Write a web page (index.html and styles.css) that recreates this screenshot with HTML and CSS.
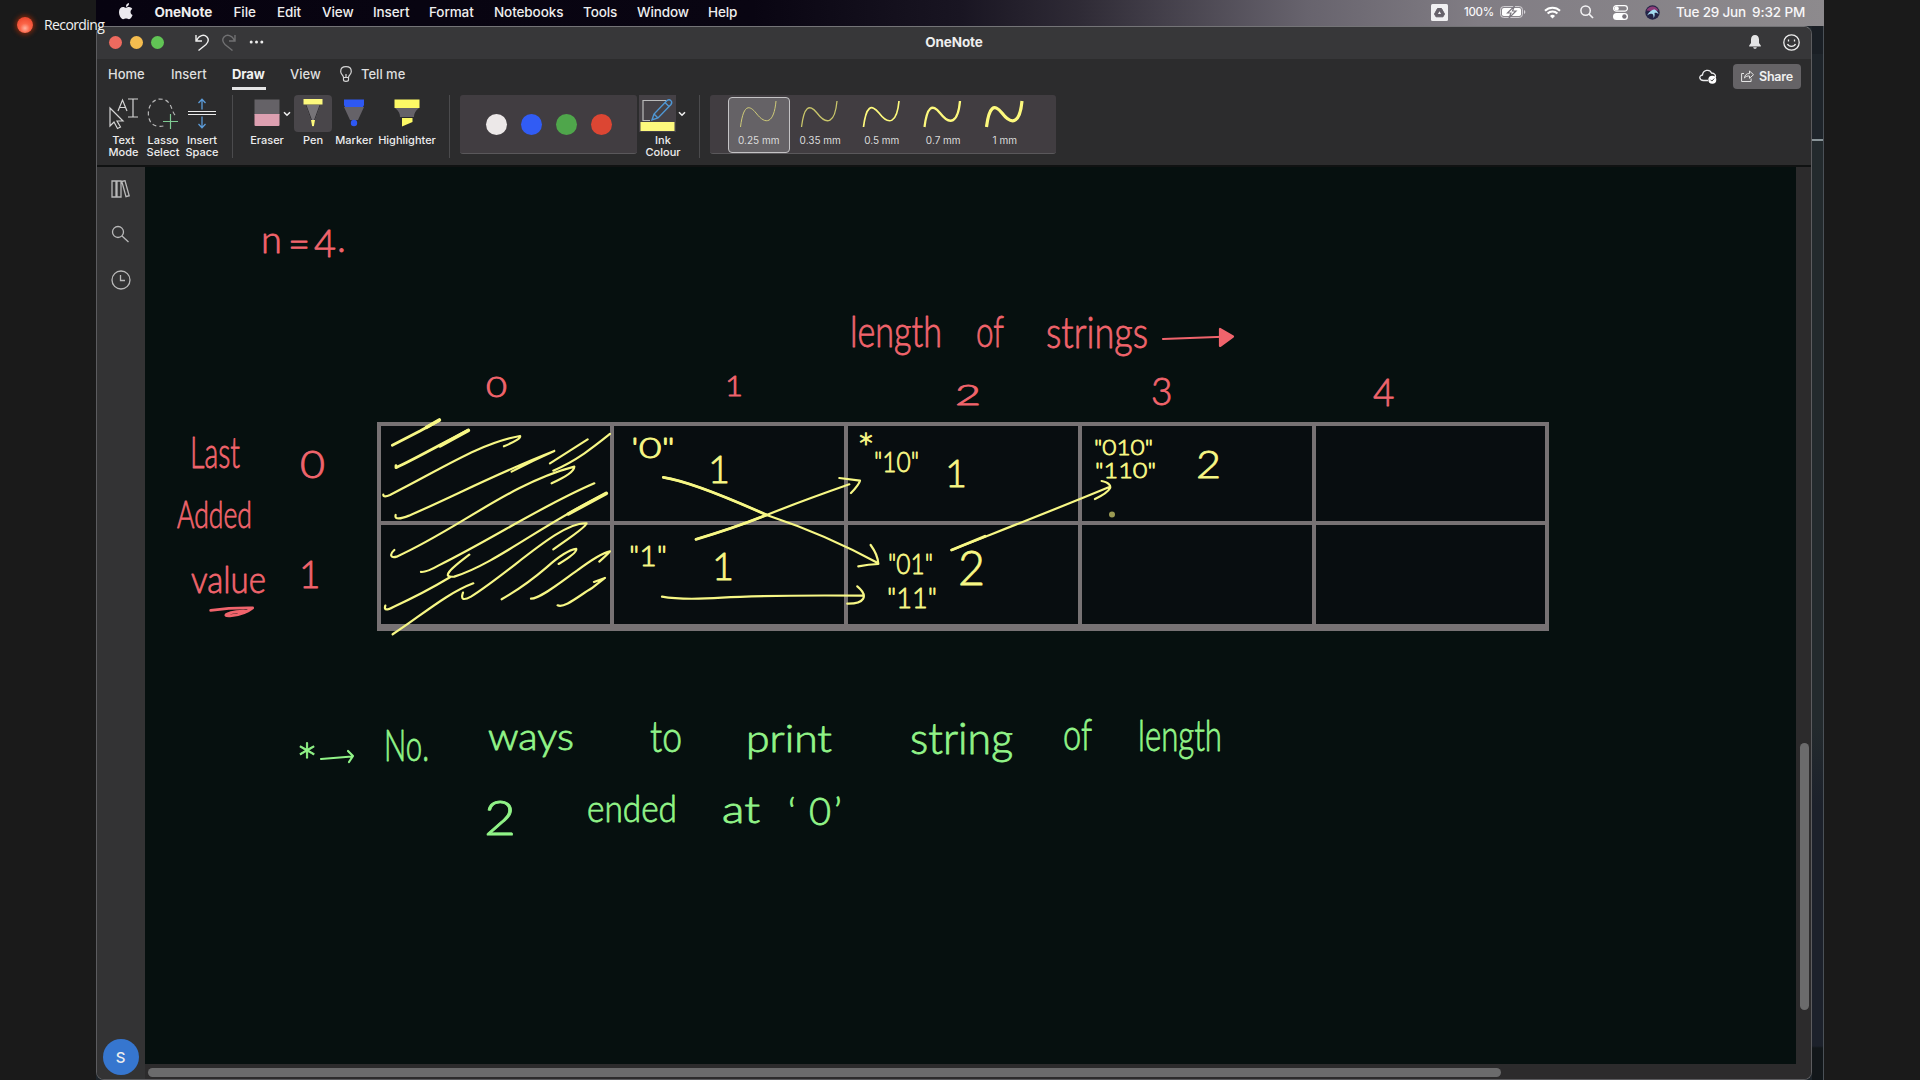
FILE: index.html
```
<!DOCTYPE html>
<html lang="en">
<head>
<meta charset="utf-8">
<title>OneNote</title>
<link rel="stylesheet" href="styles.css">
</head>
<body>
<div class="recording">
  <span class="rec-dot"></span><span>Recording</span>
</div>
<div class="desktop">
  <header class="menubar">
    <nav class="menus">
      <svg class="apple" viewBox="0 0 14 17"><path d="M10 0C8 .2 6.800 1.800 7 3.900 9 3.700 10.200 2 10 0ZM7.100 4.800C6.300 4.800 5.200 4 4 4 2 4 0 5.600 0 9c0 3.600 2.200 7.200 4.100 7.200 1.100 0 1.700-.7 3-.7s1.800.7 2.900.7c1.700 0 3-2.500 3.600-4.200-2.700-1.200-2.600-4.800-.3-6-.8-1.200-2-1.900-3.200-1.900-1.200 0-2.200.7-3 .7Z"/></svg>
      <b>OneNote</b><span>File</span><span>Edit</span><span>View</span><span>Insert</span><span>Format</span><span>Notebooks</span><span>Tools</span><span>Window</span><span>Help</span>
    </nav>
    <div class="status">
      <svg class="s-drive" viewBox="0 0 17 17"><rect width="17" height="17" rx="1.500" fill="#f1f0f2"/><path d="M6.500 4.500h4l3 5.500-1.500 2.800H5L3.500 10Z" fill="#66616a" stroke="#66616a" stroke-linejoin="round"/><path d="M8.500 7.200l1.600 2.900H6.900Z" fill="#f1f0f2"/></svg>
      <span class="pct">100%</span>
      <svg class="s-batt" viewBox="0 0 26 12"><rect x=".6" y=".6" width="21.800" height="10.800" rx="3" fill="none" stroke="#d7d4d9"/><rect x="2" y="2" width="19" height="8" rx="1.800" fill="#fff"/><path d="M24 4c1.800.6 1.800 3.400 0 4Z" fill="#d7d4d9"/><path d="M14.500 0 7.500 7h3.500L9 12l7-7h-3.500Z" fill="#fff" stroke="#7c7880" stroke-width="1.200"/></svg>
      <svg class="s-wifi" viewBox="0 0 17 13"><path d="M1 4.700C5 .6 12 .6 16 4.700M3.600 7.500c2.700-2.800 7.100-2.800 9.800 0" fill="none" stroke="#fff" stroke-width="2"/><path d="M8.500 12.500 6 9.900c1.400-1.400 3.600-1.400 5 0Z" fill="#fff"/></svg>
      <svg class="s-find" viewBox="0 0 14 14"><circle cx="5.600" cy="5.600" r="4.700" fill="none" stroke="#f3f2f4" stroke-width="1.500"/><path d="m9 9 4 4" stroke="#f3f2f4" stroke-width="1.700"/></svg>
      <svg class="s-cc" viewBox="0 0 15 15"><rect x=".6" y=".6" width="13.800" height="5.600" rx="2.800" fill="none" stroke="#fff" stroke-width="1.200"/><circle cx="3.600" cy="3.400" r="2.200" fill="#fff"/><rect y="8" width="15" height="7" rx="3.500" fill="#fff"/><circle cx="11.400" cy="11.500" r="2.200" fill="#77737b"/></svg>
      <svg class="s-siri" viewBox="0 0 15 15"><circle cx="7.500" cy="7.500" r="7.200" fill="#252447"/><path d="M1.500 5.500C4 0 11 0 13.500 5.500L7 6Z" fill="#8d3b78"/><path d="M2 10.500C4 7 7 4.500 9 4.500c2 0 4 2.500 4.500 4.500-2-1.500-3-1.500-4-1 .5 2 0 4-1 5 0-2 0-3-1-4-2-.5-3.500 0-5.500 1.500Z" fill="#a5dcf2"/></svg>
      <span class="date">Tue 29 Jun</span><span class="time">9:32 PM</span>
    </div>
  </header>
  <div class="stage">
    <main class="window">
      <div class="titlebar">
        <div class="lights"><i class="red"></i><i class="amber"></i><i class="green"></i></div>
        <svg class="undo" viewBox="0 0 14 17"><path d="M1 1v6h6M1.500 6.500C4 1 9 0 12 3c2.500 3 1 5.500-1 7.500L3.500 16.500" /></svg>
        <svg class="undo redo" viewBox="0 0 14 17"><path d="M13 1v6H7M12.500 6.500C10 1 5 0 2 3-.5 6 1 8.500 3 10.500l7.500 6" /></svg>
        <svg class="dots" viewBox="0 0 14 4"><circle cx="1.700" cy="2" r="1.500"/><circle cx="7" cy="2" r="1.500"/><circle cx="12.300" cy="2" r="1.500"/></svg>
        <b class="title">OneNote</b>
        <svg class="bell" viewBox="0 0 12 14"><path d="M6 0C3.500 0 2 2 2 4.500V8L.2 10.500V11.500h11.600v-1L10 8V4.500C10 2 8.500 0 6 0ZM4.200 12.200h3.600C7.500 14.200 4.500 14.200 4.200 12.200Z" fill="#e4e4e5"/></svg>
        <svg class="smile" viewBox="0 0 17 17"><circle cx="8.500" cy="8.500" r="7.700"/><path d="M4.500 10c1.500 3.200 6.500 3.200 8 0M5.500 5.500v2M11.500 5.500v2"/></svg>
      </div>
      <div class="tabs">
        <span>Home</span><span>Insert</span><span class="active">Draw</span><span>View</span>
        <svg class="bulb" viewBox="0 0 12 16"><path d="M3.500 11.500C3.500 9 .7 8.500.7 5.500.7 2.500 3 .7 6 .7s5.300 1.800 5.300 4.800c0 3-2.800 3.500-2.800 6ZM3.500 11.500v2.500c0 1.700 5 1.700 5 0v-2.500M6 8v3"/></svg>
        <span>Tell me</span>
        <svg class="cloud" viewBox="0 0 18 15"><path d="M4.500 11.500C0 11.500-.5 6.500 3.500 6 4 1 10.500-.5 12.500 4c3 0 4.500 2 3.800 4.500M4.500 11.500H9" fill="none" stroke="#ededee" stroke-width="1.300"/><circle cx="13.300" cy="10.700" r="4" fill="#fff"/><path d="m11.500 10.700 1.400 1.400 2.300-2.600" fill="none" stroke="#444"/></svg>
        <div class="share"><svg viewBox="0 0 13 12"><path d="M3 3.500H.6v8h9.500V8.500M3.500 8c.3-3 2-4.500 5-4.500V1l4 3.700-4 3.600V6C6.500 5.800 5 6.200 3.500 8Z"/></svg>Share</div>
      </div>
      <div class="ribbon">
        <div class="tool w-text"><svg viewBox="0 0 30 32"><path d="M1 10v18l4-4 3.500 6.500 3-1.500-3.500-6H14ZM9 13l4.500-11L18 13M10.500 9.500h6M19 1h10M19 19h10M24 1v18" fill="none" stroke="#d4d4d4" stroke-width="1.200"/></svg><p>Text<br>Mode</p></div>
        <div class="tool w-lasso"><svg viewBox="0 0 32 32"><path d="M28 17C24 13 25 1 13 1-2 2-2 27 10 28c4 1 7 0 9-1" fill="none" stroke="#b6b6b6" stroke-width="1.200" stroke-dasharray="4 3"/><path d="M23.500 16v15M16 23.500h15" stroke="#7fcb93" stroke-width="1.200"/></svg><p>Lasso<br>Select</p></div>
        <div class="tool w-space"><svg viewBox="0 0 30 32"><path d="M1 13.500h28M1 16.500h28" stroke="#ececec" stroke-width="1.100"/><path d="M15 11.500V1.500M11.500 5 15 1.300 18.500 5M15 18.500v11M11.500 26l3.500 3.700L18.500 26" fill="none" stroke="#5b9bd8" stroke-width="1.300"/></svg><p>Insert<br>Space</p></div>
        <div class="divider"></div>
        <div class="tool w-eraser"><svg viewBox="0 0 26 32"><path d="M.5 1.500h25V17H.5Z" fill="#656267"/><path d="M.5 16h25v11a1 1 0 0 1-1 1h-23a1 1 0 0 1-1-1Z" fill="#dda0b1"/></svg><p>Eraser</p></div>
        <svg class="chev" viewBox="0 0 8 6"><path d="m1 1.200 3 3 3-3"/></svg>
        <div class="tool w-pen"><svg class="picked" viewBox="0 0 38 37"><path d="M9.500 4h19v5.500h-19Z" fill="#fdf97d"/><path d="M11.500 10h15L21 25h-4Z" fill="#777478"/><path d="m12 10 5.500 15M26 10l-5.500 15" stroke="#343236" stroke-width="1"/><path d="M17 25h4l-1 5.500-1 1-1-1Z" fill="#fdf97d"/></svg><p>Pen</p></div>
        <div class="tool w-marker"><svg viewBox="0 0 22 32"><path d="M1 9h20L15 22H7Z" fill="#656268"/><path d="M1 1.500h20V7L20 9H2L1 7Z" fill="#2e58f2"/><circle cx="11" cy="25" r="3.200" fill="#2e58f2"/></svg><p>Marker</p></div>
        <div class="tool w-high"><svg viewBox="0 0 26 32"><path d="M1 10h24c-4 3-5 6-5 9H6c0-3-1-6-5-9Z" fill="#656268"/><path d="M.5 1.500h25V10H.5ZM8 20h10.500v4L8 28.500Z" fill="#fdf965"/></svg><p>Highlighter</p></div>
        <div class="divider"></div>
        <div class="colours"><i class="c-white"></i><i class="c-blue"></i><i class="c-green"></i><i class="c-red"></i></div>
        <div class="tool w-ink"><svg class="inkicon" viewBox="0 0 37 37"><path d="M27 5.500H4v20h7" fill="none" stroke="#bbb" stroke-width="1.200"/><path d="m13 25 2-6L28 5.500c3-2 6 1 4 4L19 23Zm2-6 4 4M26 7.500l4.500 4.500" fill="none" stroke="#4f97d4" stroke-width="1.400"/><path d="M1.500 27h34v9h-34Z" fill="#fdf97d"/></svg><p>Ink<br>Colour</p></div>
        <svg class="chev" viewBox="0 0 8 6"><path d="m1 1.200 3 3 3-3"/></svg>
        <div class="divider"></div>
        <div class="widths">
          <div class="sel"><svg viewBox="0 0 40 28"><path class="w1" d="M1.500 27C4 7 9 3 17 13c10 13 18 10 20-12"/></svg>0.25 mm</div>
          <div><svg viewBox="0 0 40 28"><path class="w2" d="M1.500 27C4 7 9 3 17 13c10 13 18 10 20-12"/></svg>0.35 mm</div>
          <div><svg viewBox="0 0 40 28"><path class="w3" d="M1.500 27C4 7 9 3 17 13c10 13 18 10 20-12"/></svg>0.5 mm</div>
          <div><svg viewBox="0 0 40 28"><path class="w4" d="M1.500 27C4 7 9 3 17 13c10 13 18 10 20-12"/></svg>0.7 mm</div>
          <div><svg viewBox="0 0 40 28"><path class="w5" d="M1.500 27C4 7 9 3 17 13c10 13 18 10 20-12"/></svg>1 mm</div>
        </div>
      </div>
      <div class="body">
        <aside class="rail">
          <svg class="lib" viewBox="0 0 19 18"><path d="M1 1h4v16H1ZM6 1h4v16H6ZM10.800 1.500l3.200-.8 4.200 15-3.200 1Z"/></svg>
          <svg class="lib" viewBox="0 0 19 18"><circle cx="7" cy="7" r="5.500"/><path d="m11 11 6.500 6"/></svg>
          <svg class="lib clock" viewBox="0 0 20 20"><circle cx="10" cy="10" r="9"/><path d="M9.500 5v5.500H14"/></svg>
          <span class="avatar">S</span>
        </aside>
        <section class="page">
          <div class="grid"><i></i><i></i><i></i><i></i><i></i><i></i><i></i><i></i><i></i><i></i></div>
          <svg class="ink" viewBox="145 167 1651 897">
            <g class="pink">
              <text class="m" x="261 288 314 337" y="253 257 257 252">n=4.</text>
              <text class="l" x="850" y="347" textLength="92" lengthAdjust="spacingAndGlyphs">length</text>
              <text class="l" x="976" y="347" textLength="28" lengthAdjust="spacingAndGlyphs">of</text>
              <text class="l" x="1046" y="348" textLength="102" lengthAdjust="spacingAndGlyphs">strings</text>
              <text class="s" x="486" y="397" textLength="21" lengthAdjust="spacingAndGlyphs">0</text>
              <text class="s" x="725" y="396" textLength="18" lengthAdjust="spacingAndGlyphs">1</text>
              <text class="s" x="955" y="405" textLength="26" lengthAdjust="spacingAndGlyphs">2</text>
              <text class="n" x="1151" y="405">3</text>
              <text class="n" x="1373" y="406">4</text>
              <text class="l" x="190" y="468" textLength="50" lengthAdjust="spacingAndGlyphs">Last</text>
              <text class="n" x="300" y="478" textLength="25" lengthAdjust="spacingAndGlyphs">0</text>
              <text class="m" x="177" y="528" textLength="75" lengthAdjust="spacingAndGlyphs">Added</text>
              <text class="m" x="191" y="593" textLength="75" lengthAdjust="spacingAndGlyphs">value</text>
              <text class="n" x="299" y="588">1</text>
              <g transform="translate(160 210) scale(.3333)"><path class="t3" d="M152 1201q60-8 126-7c-35 28-110 29-68 15q24-7 52-5"/></g>
              <path class="t2" d="m1163 339 67-2.500"/>
              <path class="t2" fill="#f0646c" d="M1220 329v17l13-9.500Z"/>
            </g>
            <g class="yellow">
              <g transform="translate(160 210) scale(.3333)">
                <path class="t3" d="M697 706 780 663 838 631M708 767v6Q745 756 840 705L925 661"/>
                <path class="t4" d="M800 652l38-22M840 708l85-47M1225 912l114-62"/>
                <path class="t2" d="M670 854c0 7 9 6 20 1C850 774 960 700 1080 678q6 8-48 31M707 915c-4 15 15 12 40 2C880 860 1010 790 1183 723M1055 785q65-34 128-62M703 1020c-14 12-13 26 7 20C890 960 1050 820 1243 770q1 19-68 50M1170 760l113-72M1180 782c70-30 120-70 170-110M783 1086q15 2 52-19C1010 980 1140 890 1303 820M928 1034c-60 45-85 70-45 66C1010 1060 1150 940 1339 850M676 1187c-5 16 7 13 24 4Q790 1150 870 1102M909 1148c-7 20 0 25 24 12C1060 1080 1200 935 1280 940q0 10-100 78M698 1273C780 1220 860 1150 940 1120M1025 1168q70-40 134-95 60-53 90-56 3 12-53 45M1113 1166c30 0 100-58 138-84Q1320 1030 1350 1024q-8 10-32 31M1193 1186c20 10 66-30 102-51l40-31-33 12"/>
              </g>
              <g transform="translate(600 400) scale(.3333)">
                <path class="t2" d="M190 232Q280 246 500 345 680 405 835 490M812 435q22 30 23 57-29 1-60 7M288 418Q400 385 500 345T748 253M718 234q31 4 62 8-3 12-27 37M186 590q60 11 180 3t422-6M772 559c36 30 20 53-30 52M1055 450C1180 400 1300 355 1528 261M1505 243c24 5 28 15 25 22q-8 15-45 32"/>
                <path class="t3" d="M288 418Q400 385 500 345M190 232Q280 246 500 345M1055 450l100-41"/>
              </g>
              <circle cx="1112" cy="514.500" r="3" fill="#9b9a53" stroke="none"/>
              <text class="s" x="631" y="458" textLength="44" lengthAdjust="spacingAndGlyphs">'0"</text>
              <text class="n" x="708" y="483" textLength="22" lengthAdjust="spacingAndGlyphs">1</text>
              <text class="s" x="629" y="566" textLength="38" lengthAdjust="spacingAndGlyphs">"1"</text>
              <text class="n" x="712" y="580" textLength="22" lengthAdjust="spacingAndGlyphs">1</text>
              <text class="star" x="857" y="464">*</text>
              <text class="s" x="874" y="472" textLength="45" lengthAdjust="spacingAndGlyphs">"10"</text>
              <text class="n" x="945" y="487" textLength="22" lengthAdjust="spacingAndGlyphs">1</text>
              <text class="s" x="888" y="574" textLength="45" lengthAdjust="spacingAndGlyphs">"01"</text>
              <text class="s" x="887" y="608" textLength="50" lengthAdjust="spacingAndGlyphs">"11"</text>
              <text class="xl" x="958" y="585" textLength="27" lengthAdjust="spacingAndGlyphs">2</text>
              <text class="xs" x="1094" y="455" textLength="59" lengthAdjust="spacingAndGlyphs">"010"</text>
              <text class="xs" x="1095" y="478" textLength="61" lengthAdjust="spacingAndGlyphs">"110"</text>
              <text class="n" x="1196" y="478" textLength="25" lengthAdjust="spacingAndGlyphs">2</text>
            </g>
            <g class="lime">
              <text class="star big" x="296" y="781">*</text>
              <path class="t2" d="m321 759 31-2.500M348 751l5 5-4 6"/>
              <text class="l" x="384" y="761" textLength="45" lengthAdjust="spacingAndGlyphs">No.</text>
              <text class="m" x="488" y="750" textLength="86" lengthAdjust="spacingAndGlyphs">ways</text>
              <text class="l" x="650" y="752" textLength="32" lengthAdjust="spacingAndGlyphs">to</text>
              <text class="m" x="746" y="752" textLength="86" lengthAdjust="spacingAndGlyphs">print</text>
              <text class="l" x="910" y="754" textLength="103" lengthAdjust="spacingAndGlyphs">string</text>
              <text class="l" x="1063" y="750" textLength="29" lengthAdjust="spacingAndGlyphs">of</text>
              <text class="l" x="1138" y="751" textLength="84" lengthAdjust="spacingAndGlyphs">length</text>
              <text class="xl" x="484" y="835" textLength="32" lengthAdjust="spacingAndGlyphs">2</text>
              <text class="m" x="587" y="822" textLength="90" lengthAdjust="spacingAndGlyphs">ended</text>
              <text class="m" x="722" y="823" textLength="38" lengthAdjust="spacingAndGlyphs">at</text>
              <text class="m" x="788 809 834" y="825">‘0’</text>
            </g>
          </svg>
        </section>
        <div class="vtrack"><i></i></div>
        <div class="htrack"><i></i></div>
      </div>
    </main>
    <div class="behind"></div>
  </div>
</div>
</body>
</html>
```
FILE: styles.css
```
* { box-sizing: border-box; }
body { margin: 0; width: 1920px; height: 1080px; overflow: hidden; background: #1a1a1a; color: #eee; font-family: Inter, "Liberation Sans", sans-serif; position: relative; }
svg { display: block; flex: none; }
p { margin: 0; }
.recording { position: absolute; z-index: 5; left: 17px; top: 15px; display: flex; align-items: center; gap: 11px; font: 14px/20px "Open Sans", sans-serif; color: #f2f2f2; letter-spacing: -.6px; }
.rec-dot { width: 16px; height: 16px; border-radius: 50%; background: radial-gradient(circle at 50% 70%, #ffb3a0 0, #fb6548 35%, #ee4a30 75%); box-shadow: 0 0 4px 2px #74260e; }
.desktop { width: 1728px; height: 1080px; margin-left: 96px; display: flex; flex-direction: column; background: #1d242a; }
.menubar { height: 26px; padding-bottom: 2px; flex: none; display: flex; justify-content: space-between; align-items: center; background: linear-gradient(90deg, #070310 0, #090512 38%, #191522 50%, #2f2b36 57%, #67636d 70%, #817d84 80%, #8d8a8d 100%); font-size: 13.5px; font-weight: 500; letter-spacing: -.1px; }
.menus { display: grid; grid-template-columns: 36px 79px 43.5px 45px 51px 56px 65px 89px 54px 71px 60px; padding-left: 22.500px; align-items: center; }
.menus b { font-weight: 700; }
.apple { width: 14px; height: 17px; fill: #ebe9ee; margin-top: -2px; }
.status { display: flex; align-items: center; padding-right: 18px; color: #f8f7f9; }
.s-drive { width: 17px; height: 17px; margin-right: 16px; }
.pct { width: 31px; font-size: 11.500px; letter-spacing: -.3px; margin-right: 5px; }
.s-batt { width: 26px; height: 12px; margin-right: 18px; }
.s-wifi { width: 17px; height: 13px; margin-right: 19px; }
.s-find { width: 14px; height: 14px; margin-right: 19px; }
.s-cc { width: 15px; height: 15px; margin-right: 17px; }
.s-siri { width: 15px; height: 15px; margin-right: 16px; }
.date { width: 76px; white-space: nowrap; letter-spacing: -.2px; }
.time { width: 54px; white-space: nowrap; }
.stage { flex: 1; display: flex; }
.window { width: 1716px; height: 1054px; border: 1px solid #5c5c5f; border-top-color: #747477; border-radius: 8px; overflow: hidden; display: flex; flex-direction: column; background: #2c2c2d; }
.behind { flex: 1; border-right: 1px solid #4b5157; background: linear-gradient(#1a1f25 0 28px, #1e242a 28px 113px, #899498 113px 115px, #232a2d 115px 700px, #1c212b 780px 1020px, #12171a 1022px); }
.titlebar { height: 32px; flex: none; display: flex; align-items: center; background: #373739; padding: 0 11px 2px 12px; }
.lights { display: flex; gap: 8px; width: 86px; }
.lights i { width: 13px; height: 13px; border-radius: 50%; }
.red { background: #ee6a5f; } .amber { background: #f5bd4f; } .green { background: #61c455; }
.undo { width: 14px; height: 17px; fill: none; stroke: #eee; stroke-width: 1.400; margin-right: 13px; }
.redo { stroke: #707072; }
.dots { width: 15px; height: 4px; fill: #eee; }
.title { margin-left: 658px; font-size: 13.500px; letter-spacing: -.1px; width: 64px; text-align: center; }
.bell { width: 12px; height: 14px; margin-left: auto; margin-right: 22px; }
.smile { width: 17px; height: 17px; fill: none; stroke: #eee; stroke-width: 1.300; }
.tabs { height: 34px; flex: none; display: flex; align-items: center; padding: 0 10px 0 11px; font-size: 13px; font-weight: 500; color: #dfdfdf; padding-bottom: 5px; }
.tabs span { white-space: nowrap; width: 58px; }
.tabs span:nth-child(1) { width: 63px; } .tabs span:nth-child(2) { width: 61px; }
.tabs .active { width: 34px; margin-right: 24px; font-weight: 700; color: #f2f2f2; height: 28px; line-height: 25px; margin-top: 4px; border-bottom: 3px solid #e5e5e5; letter-spacing: -.1px; }
.tabs span:nth-child(4) { width: 50px; }
.bulb { width: 12px; height: 16px; fill: none; stroke: #d6d6d6; stroke-width: 1.200; margin-right: 9px; }
.cloud { width: 18px; height: 15px; margin-left: auto; margin-right: 16px; margin-top: 5px; }
.share { width: 68px; height: 25px; margin-top: 5px; border-radius: 4px; background: #656366; display: flex; align-items: center; justify-content: center; gap: 5px; font-size: 12.500px; font-weight: 600; color: #f0f0f0; letter-spacing: -.2px; }
.share svg { width: 13px; height: 12px; fill: none; stroke: #e4e4e4; }
.ribbon { height: 74px; flex: none; display: flex; align-items: flex-start; padding: 2px 0 0 5px; border-bottom: 2px solid #101212; }
.tool { display: flex; flex-direction: column; align-items: center; font-size: 11px; font-weight: 500; line-height: 12.200px; text-align: center; color: #ededed; padding-top: 3px; flex: none; }
.tool svg { height: 32px; margin-bottom: 4px; }
.w-text { width: 43px; } .w-text svg, .w-space svg { width: 30px; }
.w-lasso { width: 36px; } .w-lasso svg { width: 32px; }
.w-space { width: 42px; margin-right: 9px; }
.divider { width: 1px; height: 63px; background: #4b4b4d; }
.w-eraser { width: 42px; margin-left: 13px; } .w-eraser svg { width: 26px; }
.chev { width: 8px; height: 6px; fill: none; stroke: #eee; stroke-width: 1.600; margin: 16px 4px 0 -5px; }
.tool.w-pen { width: 38px; padding-top: 0; }
.tool .picked { width: 38px; height: 37px; border-radius: 4px; background: #49464a; margin-bottom: 2px; }
.w-pen { margin-left: -1px; margin-right: 2px; }
.w-marker { width: 40px; } .w-marker svg { width: 22px; }
.w-high { width: 62px; margin-left: 2px; margin-right: 11px; } .w-high svg { width: 26px; }
.colours { margin: 0 2px 0 10px; width: 177px; height: 59px; border-radius: 3px; background: #413d41; border-bottom: 1px solid #5a585b; display: flex; align-items: center; justify-content: center; gap: 14px; flex: none; }
.colours i { width: 21px; height: 21px; border-radius: 50%; }
.c-white { background: #ece8e8; } .c-blue { background: #315cf4; } .c-green { background: #4fa64b; } .c-red { background: #dc4633; }
.tool.w-ink { width: 48px; padding-top: 0; }
.tool .inkicon { width: 37px; height: 37px; background: #454146; margin-bottom: 2px; align-self: flex-start; }
.w-ink + .chev { margin-left: -9px; margin-right: 13px; }
.widths { margin: 0 0 0 10px; width: 346px; height: 59px; border-radius: 3px; background: #413d41; border-bottom: 1px solid #5a585b; display: flex; padding: 2px 0 0 18px; flex: none; }
.widths div { width: 61.500px; height: 56px; padding-top: 2px; display: flex; flex-direction: column; align-items: center; gap: 6px; font-size: 10px; line-height: 13px; color: #dcdcdc; border: 1px solid transparent; flex: none; }
.widths .sel { background: #656266; border: 1.500px solid #c4c3c5; border-radius: 4px; }
.widths svg { width: 40px; height: 28px; fill: none; stroke: #fdf97d; }
.w1 { stroke: #cfcb79; stroke-width: 1; } .w2 { stroke: #c8c56b; stroke-width: 1.300; } .w3 { stroke-width: 1.700; } .w4 { stroke-width: 2.300; } .w5 { stroke-width: 3.200; }
.body { flex: 1; display: grid; grid-template: 897px 15px / 48px 1651px 15px; }
.rail { grid-row: 1 / 3; background: #333334; display: flex; flex-direction: column; align-items: center; padding: 13px 1px 4px 0; }
.lib { width: 19px; height: 18px; fill: none; stroke: #b9b9b9; stroke-width: 1.300; margin-bottom: 27px; }
.clock { width: 20px; height: 20px; }
.avatar { margin-top: auto; width: 36px; height: 36px; border-radius: 50%; background: #3676cf; display: grid; place-items: center; font-size: 15px; font-weight: 500; }
.page { position: relative; background: #06100f; padding: 255px 0 0 232px; }
.grid { width: 1172px; height: 209px; display: grid; grid-template: 95px 99px / 229px 230px 230px 229.500px 229px; gap: 4px; padding: 4px 4px 6px 4px; background: #777274; }
.grid i { background: #080d10; }
.ink { position: absolute; left: 0; top: 0; width: 1651px; height: 897px; fill: none; stroke-linecap: round; stroke-linejoin: round; }
.ink text { stroke-width: .8px; font-family: Lato, sans-serif; font-weight: 300; font-size: 34px; }
.ink .xs { font-size: 22px; } .ink .s { font-size: 27px; } .ink .n { font-size: 37px; } .ink .m { font-size: 38px; } .ink .l { font-size: 43px; } .ink .xl { font-size: 47px; } .ink .star { font-size: 42px; } .ink .big { font-size: 52px; }
.pink { stroke: #f0646c; } .pink text { fill: #f0646c; }
.yellow { stroke: #f7f785; } .yellow text { fill: #f7f785; }
.lime { stroke: #91f488; } .lime text { fill: #91f488; }
.ink path { vector-effect: non-scaling-stroke; }
.t2 { stroke-width: 2.200; } .t3 { stroke-width: 2.800; } .t4 { stroke-width: 3.600; }
.vtrack { background: #2c2b2c; padding: 576px 0 0 4px; }
.vtrack i { display: block; width: 8.500px; height: 267px; border-radius: 5px; background: #6b6b6c; }
.htrack { grid-column: 2 / 4; background: #2c2b2c; padding: 4px 0 0 3px; }
.htrack i { display: block; width: 1353px; height: 8.500px; border-radius: 5px; background: #6b6b6c; }
```
